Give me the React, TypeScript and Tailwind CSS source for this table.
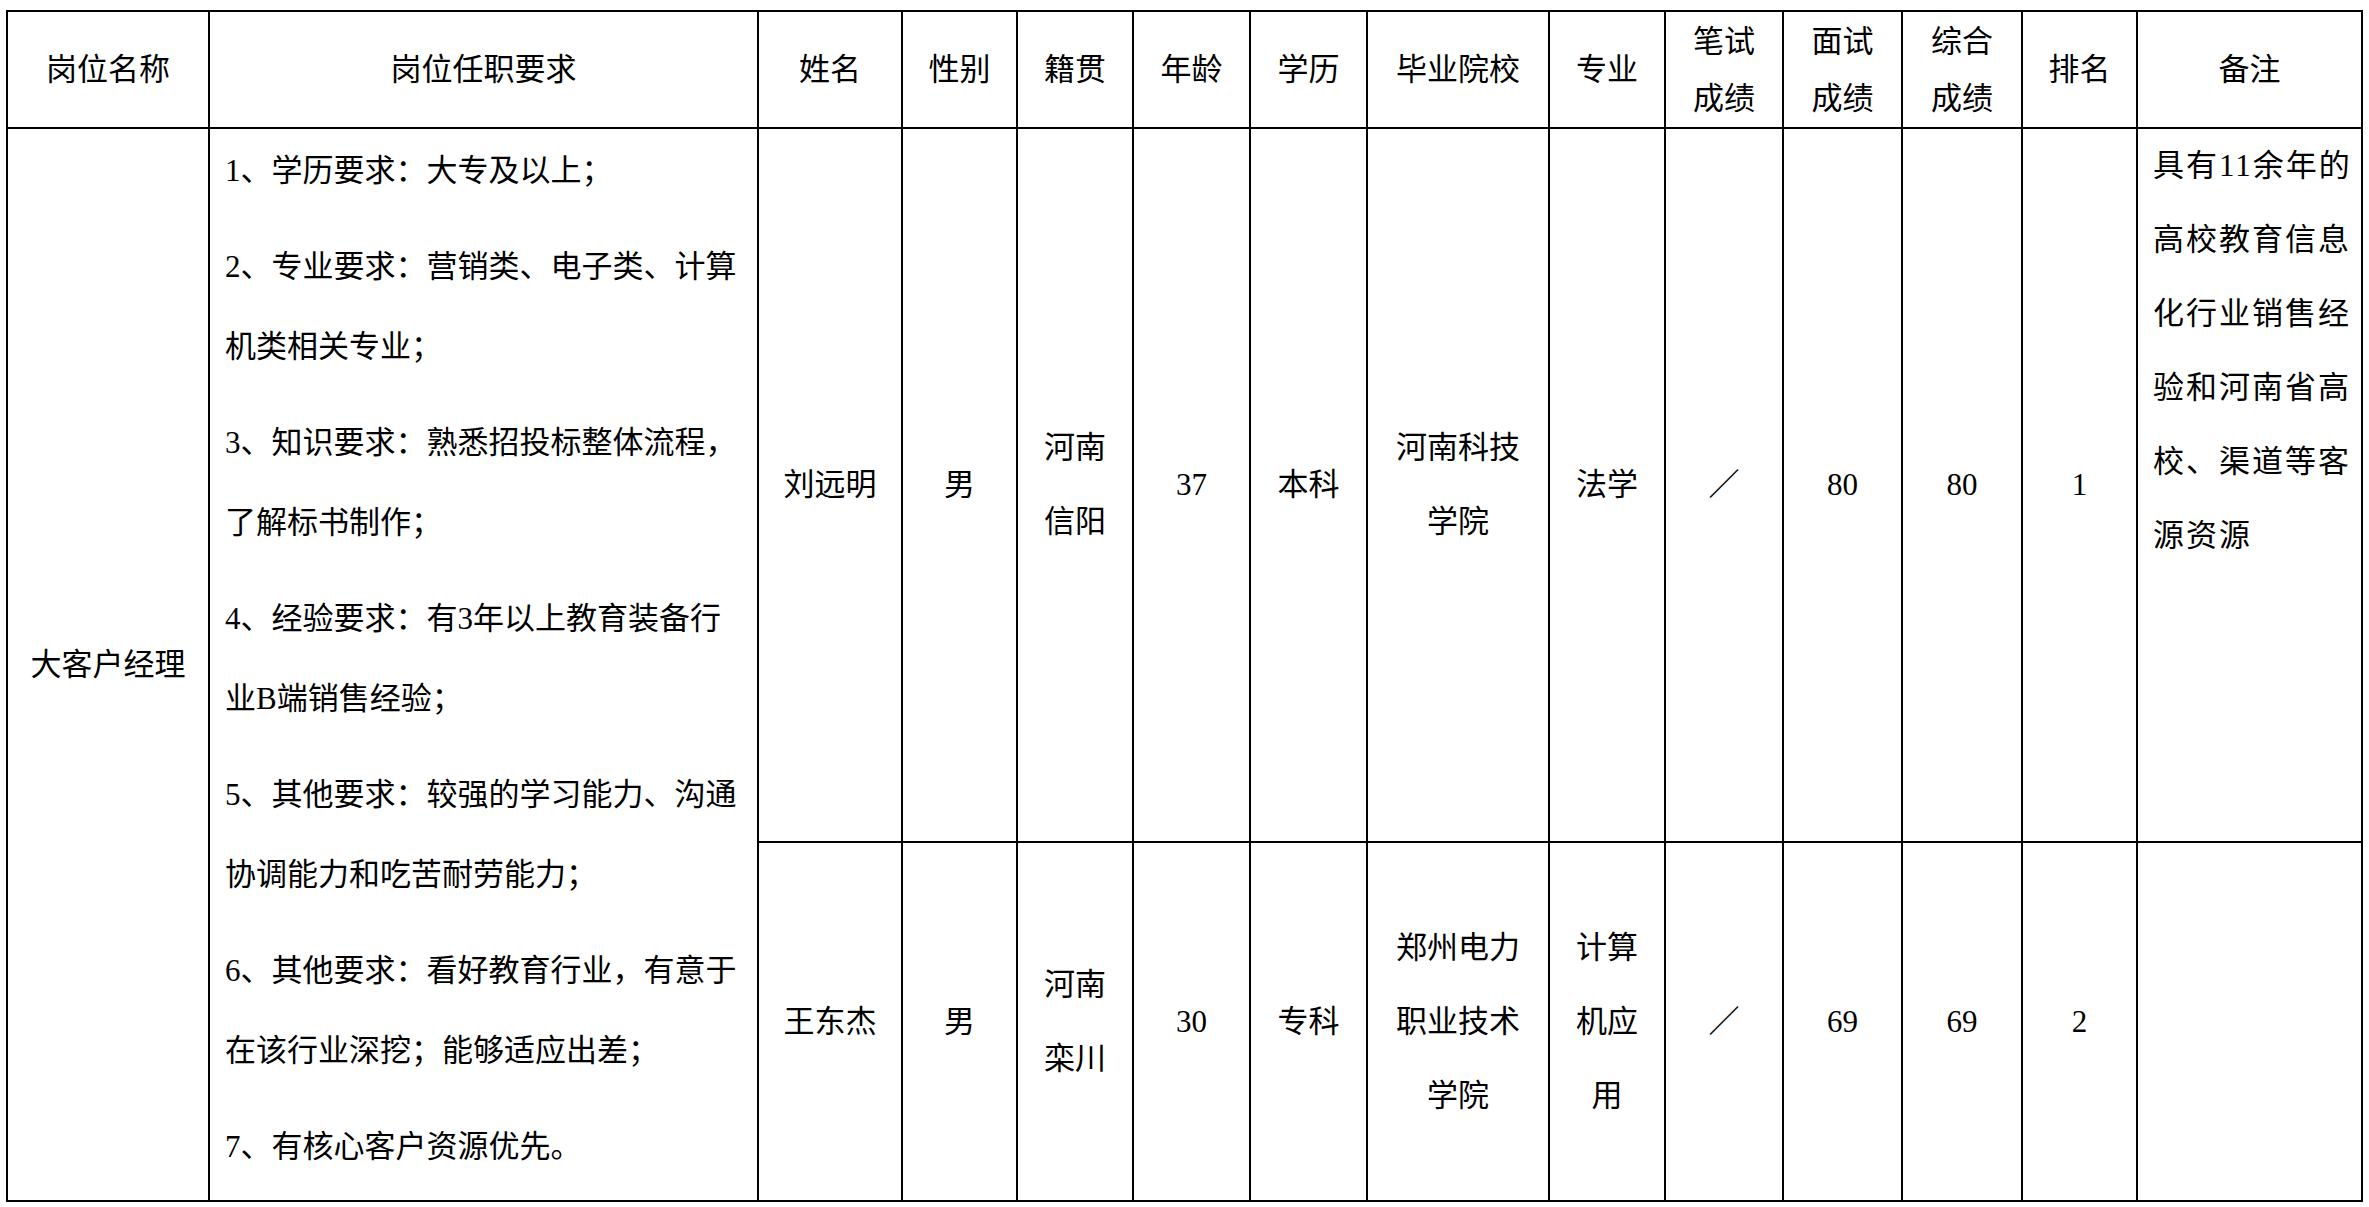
const headCell = 'bg-white flex flex-col items-center justify-center text-center leading-[57px]';
const dataCell = 'bg-white flex flex-col items-center justify-center text-center leading-[74px]';

const requirements: string[][] = [
  ['1、学历要求：大专及以上；'],
  ['2、专业要求：营销类、电子类、计算', '机类相关专业；'],
  ['3、知识要求：熟悉招投标整体流程，', '了解标书制作；'],
  ['4、经验要求：有3年以上教育装备行', '业B端销售经验；'],
  ['5、其他要求：较强的学习能力、沟通', '协调能力和吃苦耐劳能力；'],
  ['6、其他要求：看好教育行业，有意于', '在该行业深挖；能够适应出差；'],
  ['7、有核心客户资源优先。'],
];

const remarkLines = ['具有11余年的', '高校教育信息', '化行业销售经', '验和河南省高', '校、渠道等客', '源资源'];

type Candidate = {
  name: string;
  gender: string;
  origin: string[];
  age: string;
  degree: string;
  school: string[];
  major: string[];
  written: string;
  interview: string;
  total: string;
  rank: string;
  remark: string[];
};

const candidates: Candidate[] = [
  {
    name: '刘远明',
    gender: '男',
    origin: ['河南', '信阳'],
    age: '37',
    degree: '本科',
    school: ['河南科技', '学院'],
    major: ['法学'],
    written: '／',
    interview: '80',
    total: '80',
    rank: '1',
    remark: remarkLines,
  },
  {
    name: '王东杰',
    gender: '男',
    origin: ['河南', '栾川'],
    age: '30',
    degree: '专科',
    school: ['郑州电力', '职业技术', '学院'],
    major: ['计算', '机应', '用'],
    written: '／',
    interview: '69',
    total: '69',
    rank: '2',
    remark: [],
  },
];

function Lines({ lines }: { lines: string[] }) {
  return (
    <>
      {lines.map((l, i) => (
        <span key={i} className="block">
          {l}
        </span>
      ))}
    </>
  );
}

export default function App() {
  return (
    <div className="w-[2369px] h-[1207px] bg-white pt-[10px] pl-[6px] overflow-hidden text-black text-[31px] font-['Liberation_Serif','Noto_Sans_CJK_SC',serif]">
      <div className="grid w-fit grid-cols-[200px_547px_142px_113px_114px_115px_115px_180px_114px_116px_117px_118px_113px_223px] grid-rows-[115px_712px_357px] gap-[2px] bg-black p-[2px]">
        {/* header */}
        <div className={headCell}>岗位名称</div>
        <div className={headCell}>岗位任职要求</div>
        <div className={headCell}>姓名</div>
        <div className={headCell}>性别</div>
        <div className={headCell}>籍贯</div>
        <div className={headCell}>年龄</div>
        <div className={headCell}>学历</div>
        <div className={headCell}>毕业院校</div>
        <div className={headCell}>专业</div>
        <div className={headCell}>
          <Lines lines={['笔试', '成绩']} />
        </div>
        <div className={headCell}>
          <Lines lines={['面试', '成绩']} />
        </div>
        <div className={headCell}>
          <Lines lines={['综合', '成绩']} />
        </div>
        <div className={headCell}>排名</div>
        <div className={headCell}>备注</div>

        {/* position + requirements span both candidate rows */}
        <div className={`${dataCell} row-span-2`}>大客户经理</div>
        <div className="bg-white row-span-2 pl-[15px] pt-[2px] text-left leading-[80px]">
          {requirements.map((p, i) => (
            <p key={i} className={i === 0 ? '' : 'mt-[16px]'}>
              <Lines lines={p} />
            </p>
          ))}
        </div>

        {candidates.map((c) => (
          <div key={c.name} className="contents">
            <div className={dataCell}>{c.name}</div>
            <div className={dataCell}>{c.gender}</div>
            <div className={dataCell}>
              <Lines lines={c.origin} />
            </div>
            <div className={dataCell}>{c.age}</div>
            <div className={dataCell}>{c.degree}</div>
            <div className={dataCell}>
              <Lines lines={c.school} />
            </div>
            <div className={dataCell}>
              <Lines lines={c.major} />
            </div>
            <div className={dataCell}>{c.written}</div>
            <div className={dataCell}>{c.interview}</div>
            <div className={dataCell}>{c.total}</div>
            <div className={dataCell}>{c.rank}</div>
            <div className="bg-white pl-[15px] leading-[74px] tracking-[2px] text-left">
              <Lines lines={c.remark} />
            </div>
          </div>
        ))}
      </div>
    </div>
  );
}
